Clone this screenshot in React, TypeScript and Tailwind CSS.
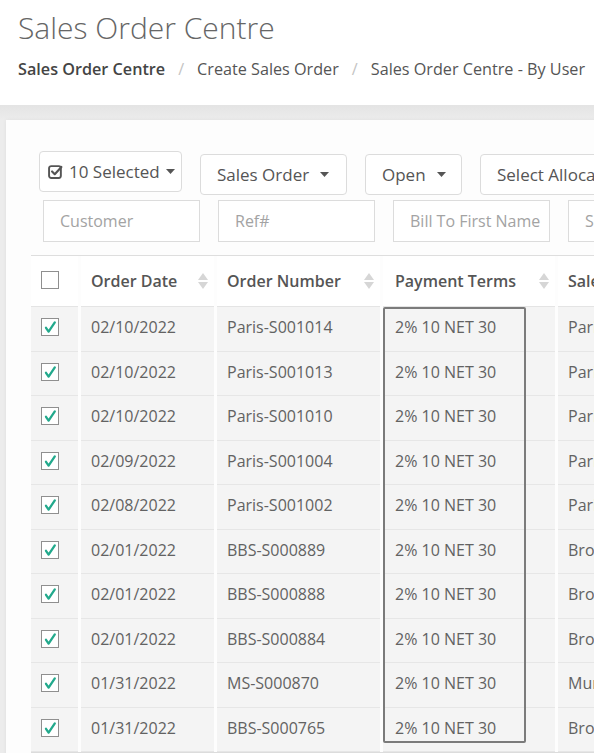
import React from 'react';

type Order = { date: string; number: string; terms: string; rep: string };

const ORDERS: Order[] = [
    { date: '02/10/2022', number: 'Paris-S001014', terms: '2% 10 NET 30', rep: 'Paris Store' },
    { date: '02/10/2022', number: 'Paris-S001013', terms: '2% 10 NET 30', rep: 'Paris Store' },
    { date: '02/10/2022', number: 'Paris-S001010', terms: '2% 10 NET 30', rep: 'Paris Store' },
    { date: '02/09/2022', number: 'Paris-S001004', terms: '2% 10 NET 30', rep: 'Paris Store' },
    { date: '02/08/2022', number: 'Paris-S001002', terms: '2% 10 NET 30', rep: 'Paris Store' },
    { date: '02/01/2022', number: 'BBS-S000889', terms: '2% 10 NET 30', rep: 'Brooklyn Store' },
    { date: '02/01/2022', number: 'BBS-S000888', terms: '2% 10 NET 30', rep: 'Brooklyn Store' },
    { date: '02/01/2022', number: 'BBS-S000884', terms: '2% 10 NET 30', rep: 'Brooklyn Store' },
    { date: '01/31/2022', number: 'MS-S000870', terms: '2% 10 NET 30', rep: 'Murray Store' },
    { date: '01/31/2022', number: 'BBS-S000765', terms: '2% 10 NET 30', rep: 'Brooklyn Store' },
];

const COLS = 'grid grid-cols-[47px_133px_163px_172px_200px] gap-x-[3px]';

const Caret = () => (
    <svg width="9" height="5" viewBox="0 0 9 5" className="shrink-0">
        <path d="M0 0 L9 0 L4.5 5 Z" fill="#555" />
    </svg>
);

const SortIcon = () => (
    <svg width="10" height="18" viewBox="0 0 10 18" className="shrink-0">
        <path d="M5 1 L10 8 L0 8 Z" fill="#d6d6d6" />
        <path d="M0 10 L10 10 L5 17 Z" fill="#d6d6d6" />
    </svg>
);

const CheckBox = ({ checked }: { checked?: boolean }) => (
    <span className="w-[18px] h-[18px] border border-[#8f8f8f] bg-white flex items-center justify-center">
        {checked && (
            <svg width="14" height="14" viewBox="0 0 14 14">
                <path d="M3 7.8 L5.6 11.6 L11.8 2.4" fill="none" stroke="#22a98c" strokeWidth="2.3" strokeLinecap="round" strokeLinejoin="round" />
            </svg>
        )}
    </span>
);

const CheckSquareIcon = () => (
    <svg width="15" height="15" viewBox="0 0 14 14" className="shrink-0">
        <rect x="1" y="2" width="11" height="11" rx="2" fill="none" stroke="#555" strokeWidth="1.8" />
        <path d="M3.8 7 L6.3 9.5 L12.5 2.8" fill="none" stroke="#555" strokeWidth="2" strokeLinecap="round" strokeLinejoin="round" />
    </svg>
);

const DropButton = ({ label, width }: { label: string; width: string }) => (
    <div className={`mt-[3px] h-[41px] ${width} shrink-0 border border-[#dcdcdc] rounded-[4px] bg-white flex items-center gap-[11px] pl-[16px] overflow-hidden whitespace-nowrap`}>
        <span className="text-[17px] text-[#555]">{label}</span>
        <Caret />
    </div>
);

const FilterInput = ({ placeholder }: { placeholder: string }) => (
    <div className="h-[42px] w-[157px] shrink-0 border border-[#dcdcdc] bg-white flex items-center pl-[16px] overflow-hidden whitespace-nowrap">
        <span className="text-[16px] text-[#a3a3a3]">{placeholder}</span>
    </div>
);

const HeaderCell = ({ label, pad = 'pl-[10px]' }: { label: string; pad?: string }) => (
    <div className={`h-[51px] border-b border-[#e4e4e4] bg-white flex items-center justify-between ${pad} pr-[6px] whitespace-nowrap`}>
        <span className="text-[16px] font-semibold text-[#555]">{label}</span>
        <SortIcon />
    </div>
);

const cell = 'h-[44.5px] pb-[3px] border-b border-[#e6e6e6] bg-[#f4f4f4] flex items-center text-[16px] text-[#626262] whitespace-nowrap overflow-hidden';

export default function App() {
    return (
        <div className="w-[594px] h-[753px] overflow-hidden bg-[#ececec] font-['Open_Sans',sans-serif]">
            {/* Page heading */}
            <div className="h-[105px] bg-white px-[18px] pt-[10px]">
                <h1 className="text-[30px] leading-[36px] font-light text-[#666] whitespace-nowrap">Sales Order Centre</h1>
                <div className="mt-[11px] flex items-center text-[16.2px] leading-[24px] whitespace-nowrap">
                    <span className="font-semibold text-[#444]">Sales Order Centre</span>
                    <span className="text-[#c4c4c4] px-[13px]">/</span>
                    <span className="text-[#555]">Create Sales Order</span>
                    <span className="text-[#c4c4c4] px-[13px]">/</span>
                    <span className="text-[#555]">Sales Order Centre - By User</span>
                </div>
            </div>

            <div className="h-[15px] bg-gradient-to-b from-[#e4e4e4] to-[#ececec]" />

            {/* Card */}
            <div className="ml-[6px] w-[640px] h-[700px] bg-[#fdfdfd] shadow-[0_0_4px_rgba(0,0,0,0.06)] pt-[31px]">
                <div className="ml-[33px] flex items-start gap-[18px]">
                    <div className="h-[41px] w-[143px] shrink-0 border border-[#dcdcdc] rounded-[4px] bg-white flex items-center pl-[8px] gap-[6px] whitespace-nowrap">
                        <CheckSquareIcon />
                        <span className="text-[17px] text-[#555]">10 Selected</span>
                        <Caret />
                    </div>
                    <DropButton label="Sales Order" width="w-[147px]" />
                    <DropButton label="Open" width="w-[97px]" />
                    <DropButton label="Select Allocation" width="w-[170px]" />
                </div>

                <div className="ml-[37px] mt-[5px] flex gap-[18px]">
                    <FilterInput placeholder="Customer" />
                    <FilterInput placeholder="Ref#" />
                    <FilterInput placeholder="Bill To First Name" />
                    <FilterInput placeholder="Ship To First Name" />
                </div>

                {/* Orders table */}
                <div className="relative ml-[25px] mt-[13px] border-t border-[#dedede]">
                    <div className={COLS}>
                        <div className="h-[51px] border-b border-[#e4e4e4] bg-white flex items-center pl-[10px] pb-[3px]">
                            <CheckBox />
                        </div>
                        <HeaderCell label="Order Date" />
                        <HeaderCell label="Order Number" />
                        <HeaderCell label="Payment Terms" pad="pl-[12px]" />
                        <HeaderCell label="Sales Rep" />
                    </div>

                    {ORDERS.map((o, i) => (
                        <div key={i} className={COLS}>
                            <div className={`${cell} pl-[10px]`}><CheckBox checked /></div>
                            <div className={`${cell} pl-[10px]`}>{o.date}</div>
                            <div className={`${cell} pl-[10px]`}>{o.number}</div>
                            <div className={`${cell} pl-[12px]`}>{o.terms}</div>
                            <div className={`${cell} pl-[10px]`}>{o.rep}</div>
                        </div>
                    ))}
                    <div className="h-[2px] bg-[#dcdcdc]" />

                    {/* highlight around the payment terms column */}
                    <div className="absolute left-[352px] top-[51px] w-[143px] h-[436px] border-2 border-[#7b7b7b] rounded-[2px] pointer-events-none" />
                </div>
            </div>
        </div>
    );
}
